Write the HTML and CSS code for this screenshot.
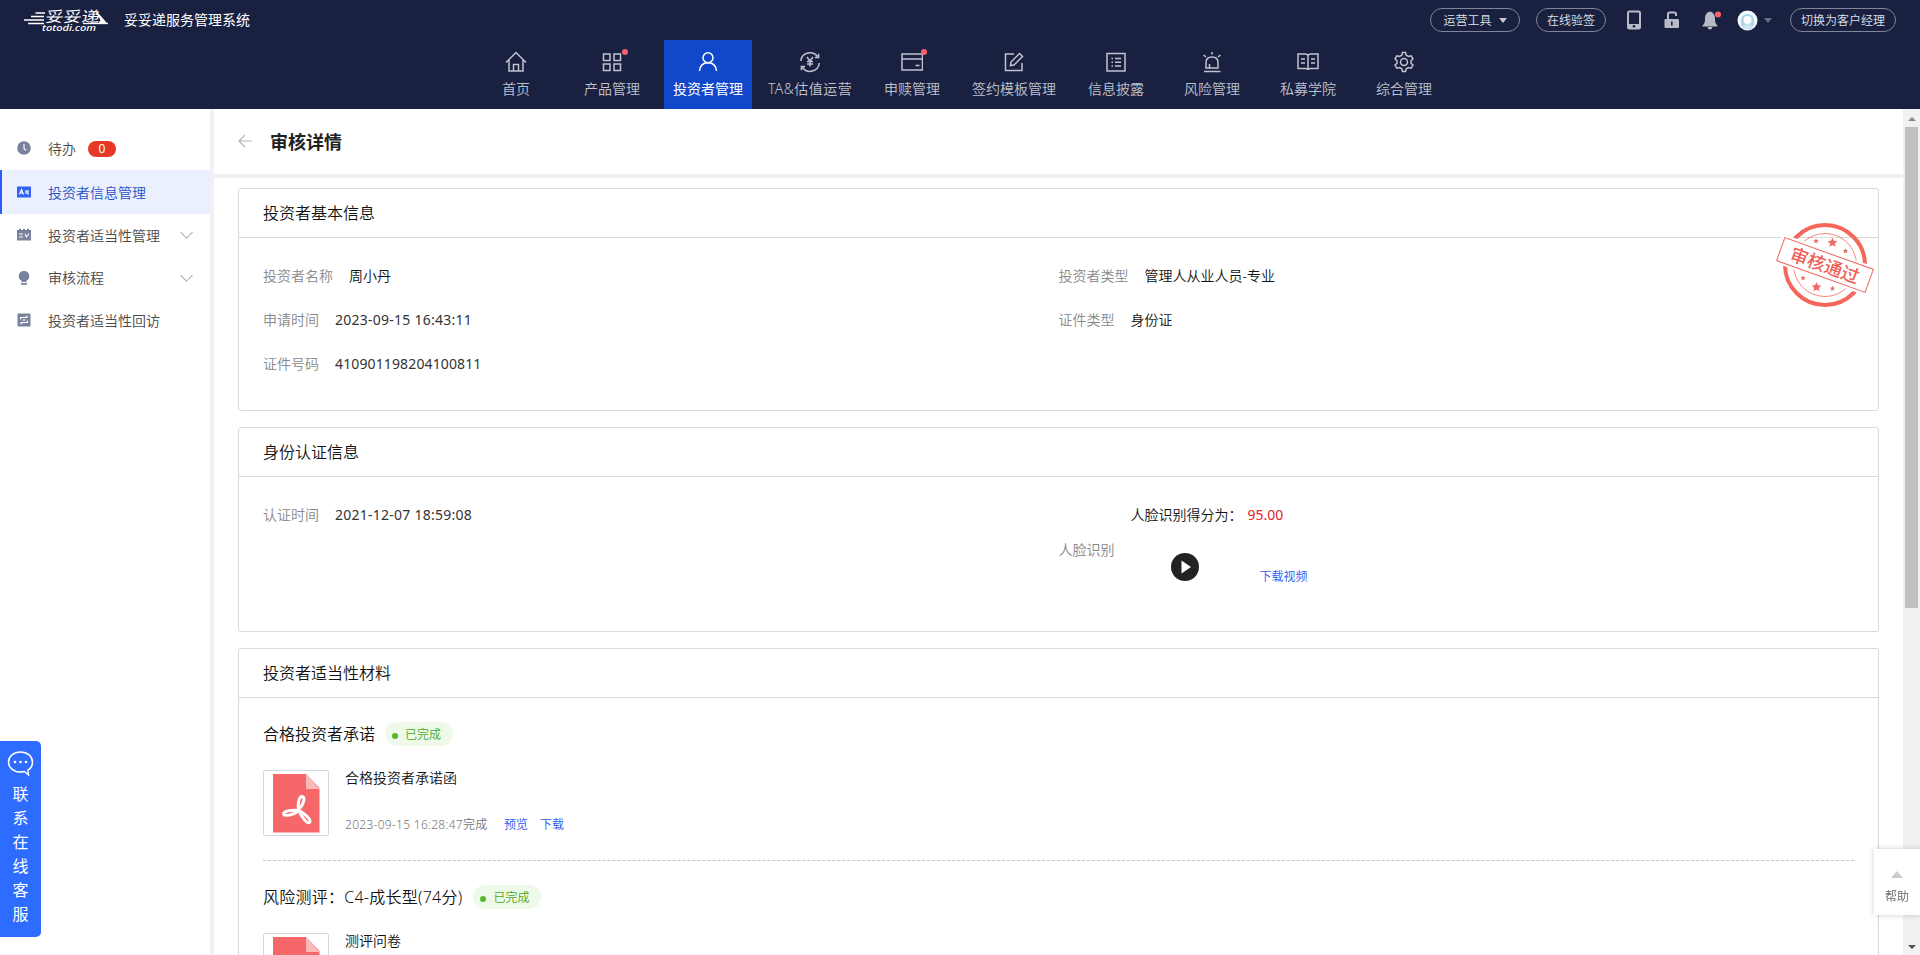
FILE: index.html
```html
<!DOCTYPE html>
<html lang="zh-CN">
<head>
<meta charset="utf-8">
<title>妥妥递服务管理系统</title>
<link rel="stylesheet" href="styles.css">
</head>
<body>
<svg class="defs" width="0" height="0">
  <symbol id="pdf" viewBox="0 0 48 60">
    <path d="M1 1H34L47.500 15V59.500H1Z" fill="#f56769"/>
    <path d="M34 1V16H47.500Z" fill="#fbb9ba"/>
    <g fill="none" stroke="#fff" stroke-width="3" stroke-linejoin="round">
      <path d="M26.500 36.500C25.500 31 27 23.500 30 23.500C34 24 31.500 32 26.500 36.500Z"/>
      <path d="M26.500 37.500C21 36.500 11.500 38 11.500 41C13 44 23 41.500 26.500 37.500Z"/>
      <path d="M27 37.500C29 43 34.500 51 37.500 49.500C40 47 33 40.500 27 37.500Z"/>
    </g>
  </symbol>
  <symbol id="star" viewBox="-10 -10 20 20"><path d="M0-9L2.600-3.200L8.700-2.800L4.200 1.600L5.500 7.700L0 4.600L-5.500 7.700L-4.200 1.600L-8.700-2.800L-2.600-3.200Z"/></symbol>
</svg>

<header class="header">
  <div class="topbar">
    <svg class="logo" width="86" height="26" viewBox="0 0 86 26">
      <g stroke="#fff" stroke-width="1.500"><path d="M11.500 6H21M7 9.500H20M0 13H20M4 16.500H20"/></g>
      <g class="logo-name" transform="translate(21 14.500) skewX(-8) scale(1.200 1)"><text x="0" y="0">妥妥递</text></g>
      <path d="M59 16.500H84" stroke="#fff" stroke-width="1.300" fill="none"/>
      <path d="M72 5C76 7 79 12 84 17H74L76.500 13C75 10 73.500 8 72 7Z" fill="#fff"/>
      <text class="logo-domain" x="18" y="24" textLength="54" lengthAdjust="spacingAndGlyphs">totodi.com</text>
    </svg>
    <span class="system-name">妥妥递服务管理系统</span>
    <div class="tools">
      <span class="pill pill-tools">运营工具<i class="caret"></i></span>
      <span class="pill pill-sign">在线验签</span>
      <svg class="tool-phone" width="14" height="20" viewBox="0 0 14 20"><rect x="1" y="1.500" width="12" height="17" rx="1.500" fill="none" stroke="#b8bbc6" stroke-width="2"/><path d="M1 14H13V18H1Z" fill="#b8bbc6"/><circle cx="7" cy="16.300" r="1.300" fill="#1a2140"/></svg>
      <svg class="tool-lock" width="16" height="18" viewBox="0 0 16 18"><rect x=".5" y="8" width="14.500" height="9" rx="1" fill="#b8bbc6"/><path d="M4 8V3Q4 1.500 5.500 1.500H10.500Q12 1.500 12 3V5" fill="none" stroke="#b8bbc6" stroke-width="2"/><rect x="7" y="10.500" width="1.600" height="4" fill="#1a2140"/></svg>
      <svg class="tool-bell" width="20" height="20" viewBox="0 0 20 20"><path d="M8 1.500C4 2.500 3 5.500 3 9C3 13 2 14 .5 15.500V16.500H15.500V15.500C14 14 13 13 13 9C13 5.500 12 2.500 8 1.500Z" fill="#b8bbc6"/><path d="M5.500 17H10.500Q10 19.500 8 19.500T5.500 17" fill="#b8bbc6"/><circle cx="16" cy="4.500" r="3" fill="#ff5f6b"/></svg>
      <svg class="tool-avatar" width="21" height="21" viewBox="0 0 21 21"><circle cx="10.500" cy="10.500" r="10" fill="#f3fbff"/><path d="M4 15Q3 4 10.500 4T17 15Q14 18 10.500 18T4 15" fill="#a9d4e8"/><circle cx="10.500" cy="10" r="4" fill="#fff"/><path d="M5 18Q6 14 10.500 14T16 18Q10.500 21 5 18" fill="#c9e6f2"/></svg>
      <i class="caret caret-dim"></i>
      <span class="pill pill-switch">切换为客户经理</span>
    </div>
  </div>
  <nav class="nav">
    <a class="nav-item"><svg class="nav-icon" viewBox="0 0 22 22"><path d="M1 11.500L11 1.500L21 11.500M4 9V20H18V9M8.500 20V13.500H13.500V20"/></svg>首页</a>
    <a class="nav-item"><svg class="nav-icon" viewBox="0 0 22 22"><path d="M2.500 3H9V9.500H2.500ZM13 3H19.500V9.500H13ZM2.500 13H9V19.500H2.500ZM13 13H19.500V19.500H13Z"/></svg><i class="dot dot-product"></i>产品管理</a>
    <a class="nav-item nav-active"><svg class="nav-icon" viewBox="0 0 22 22"><circle cx="11" cy="6.700" r="5"/><path d="M2.500 20C3 14.500 6.500 11.700 11 11.700S19 14.500 19.500 20"/></svg>投资者管理</a>
    <a class="nav-item nav-valuation"><svg class="nav-icon" viewBox="0 0 22 22"><path d="M1.800 10A9.300 9.300 0 0 1 18.500 5.500M20.300 12A9.300 9.300 0 0 1 3.500 16.500M19.600 2.800V6.500H16M2.400 19.200V15.500H6M8 6L11 10L14 6M11 10V15.500M8 10.500H14M8 13H14"/></svg>TA&amp;估值运营</a>
    <a class="nav-item"><svg class="nav-icon" viewBox="0 0 22 22"><path d="M1 3H21.500V19H1ZM1 8H21.500M14.500 14.500H18.500"/></svg><i class="dot dot-redeem"></i>申赎管理</a>
    <a class="nav-item"><svg class="nav-icon" viewBox="0 0 22 22"><path d="M11 3H2.500V19.500H19V12M7.500 14.500L8 11L16.500 2.500L19.500 5.500L11 14Z"/></svg>签约模板管理</a>
    <a class="nav-item"><svg class="nav-icon" viewBox="0 0 22 22"><path d="M2 2.500H20V20H2ZM6.500 7.500H8M10 7.500H16M6.500 11.200H8M10 11.200H16M6.500 15H8M10 15H16"/></svg>信息披露</a>
    <a class="nav-item"><svg class="nav-icon" viewBox="0 0 22 22"><path d="M5 17V11.500Q5 6 11 6T17 11.500V17ZM3 20.500H19.500M11 1V3.500M2.500 4L5 6M19.500 4L17 6M8.500 17V13"/></svg>风险管理</a>
    <a class="nav-item"><svg class="nav-icon" viewBox="0 0 22 22"><path d="M1 3H8Q11 3 11 5Q11 3 14 3H21V17.500H14Q11 17.500 11 19Q11 17.500 8 17.500H1ZM11 5V19M4 8H8M4 12H8M14 8H18M14 12H18"/></svg>私募学院</a>
    <a class="nav-item"><svg class="nav-icon" viewBox="0 0 22 22"><circle cx="11" cy="11" r="3.500"/><path d="M8.800 4.200L9.500 1.500H12.500L13.200 4.200L15.500 5.500L18.200 4.800L20 7.800L18 9.700V12.300L20 14.200L18.200 17.200L15.500 16.500L13.200 17.800L12.500 20.500H9.500L8.800 17.800L6.500 16.500L3.800 17.200L2 14.200L4 12.300V9.700L2 7.800L3.800 4.800L6.500 5.500Z"/></svg>综合管理</a>
  </nav>
</header>

<div class="layout">
  <aside class="sidebar">
    <a class="side-item"><svg class="side-icon" viewBox="0 0 14 14"><circle cx="7" cy="7" r="6.800"/><path class="cut" d="M7 3V7.500L9 9.500"/></svg>待办<span class="count">0</span></a>
    <a class="side-item side-active"><svg class="side-icon" viewBox="0 0 14 14"><path d="M0 1.500H14V12.500H0Z"/><path class="cut" d="M2.500 9.500L4.500 4.500L6.500 9.500M3 8H6M9 5V9M9 7H11M11 5V9H12"/></svg>投资者信息管理</a>
    <a class="side-item"><svg class="side-icon" viewBox="0 0 14 14"><path d="M0 2H2V.8H4V2H6V.8H8V2H10V.8H12V2H14V12.500H0Z"/><path class="cut" d="M2 6H6M2 9H6M8 6L9.500 9L12 5.500"/></svg>投资者适当性管理<i class="chevron"></i></a>
    <a class="side-item"><svg class="side-icon" viewBox="0 0 14 14"><path d="M7 0A5.200 5.200 0 0 1 9.500 9.800V11H4.500V9.800A5.200 5.200 0 0 1 7 0ZM4 12H10V13.800H4Z"/></svg>审核流程<i class="chevron"></i></a>
    <a class="side-item"><svg class="side-icon" viewBox="0 0 14 14"><path d="M.5.500H13.500V13.500H.5Z"/><path class="cut" d="M3.500 6.500V4.500H10.500M9 3L10.500 4.500M10.500 7.500V9.500H3.500M5 11L3.500 9.500M5.500 7H8.500"/></svg>投资者适当性回访</a>
  </aside>

  <main class="main">
    <div class="page-head">
      <svg class="back" width="14" height="14" viewBox="0 0 14 14"><path d="M14 7H1M7 1L1 7L7 13" fill="none" stroke="#b5b5b5" stroke-width="1.200"/></svg>
      <h1 class="page-title">审核详情</h1>
    </div>
    <div class="content">
      <section class="card card-basic">
        <h2 class="card-title">投资者基本信息</h2>
        <div class="fields">
          <div class="field"><span class="label">投资者名称</span><span>周小丹</span></div>
          <div class="field"><span class="label">投资者类型</span><span>管理人从业人员-专业</span></div>
          <div class="field"><span class="label">申请时间</span><span class="time">2023-09-15 16:43:11</span></div>
          <div class="field"><span class="label">证件类型</span><span>身份证</span></div>
          <div class="field"><span class="label">证件号码</span><span class="digits">410901198204100811</span></div>
        </div>
        <svg class="stamp" width="104" height="92" viewBox="-52 -46 104 92">
          <circle r="40" fill="none" stroke="#f5665b" stroke-width="4"/>
          <circle r="31.500" fill="none" stroke="#f5665b" stroke-width=".8"/>
          <g transform="rotate(19.800)">
            <rect x="-51" y="-15" width="102" height="30" fill="#fff"/>
            <rect x="-47" y="-12.200" width="94" height="24.400" fill="#fff" stroke="#ee6f68" stroke-width="1.100"/>
            <text class="stamp-text" x="0" y="7" text-anchor="middle">审核通过</text>
          </g>
          <g fill="#ed6b68">
            <use href="#star" x="2" y="-28" width="11" height="11"/><use href="#star" x="-12" y="-27" width="6" height="6"/><use href="#star" x="17.500" y="-17" width="6" height="6"/>
            <use href="#star" x="-14" y="16.500" width="11" height="11"/><use href="#star" x="-25" y="10" width="6" height="6"/><use href="#star" x="4.500" y="20.500" width="6" height="6"/>
          </g>
        </svg>
      </section>

      <section class="card">
        <h2 class="card-title">身份认证信息</h2>
        <div class="fields">
          <div class="field"><span class="label">认证时间</span><span class="time">2021-12-07 18:59:08</span></div>
          <div class="field field-face">
            <span class="label">人脸识别</span>
            <div class="face">
              <div class="score">人脸识别得分为：<span class="score-value">95.00</span></div>
              <div class="video">
                <svg width="28" height="28" viewBox="0 0 28 28"><circle cx="14" cy="14" r="14" fill="#222"/><path d="M10.500 7.500L20 14L10.500 20.500Z" fill="#fff"/></svg>
                <a class="link video-link">下载视频</a>
              </div>
            </div>
          </div>
        </div>
      </section>

      <section class="card">
        <h2 class="card-title">投资者适当性材料</h2>
        <div class="materials">
          <article class="material">
            <h3 class="material-title">合格投资者承诺<span class="status">已完成</span></h3>
            <div class="file">
              <div class="thumb"><svg width="48" height="60"><use href="#pdf"/></svg></div>
              <div class="file-info">
                <div class="file-name">合格投资者承诺函</div>
                <div class="file-meta"><span class="file-time">2023-09-15 16:28:47完成</span><a class="link">预览</a><a class="link">下载</a></div>
              </div>
            </div>
          </article>
          <article class="material">
            <h3 class="material-title"><span class="risk">风险测评：C4-成长型(74分)</span><span class="status">已完成</span></h3>
            <div class="file">
              <div class="thumb"><svg width="48" height="60"><use href="#pdf"/></svg></div>
              <div class="file-info"><div class="file-name">测评问卷</div></div>
            </div>
          </article>
        </div>
      </section>
    </div>
  </main>

  <div class="scrollbar"><i class="arrow-up"></i><div class="thumb-bar"></div><i class="arrow-down"></i></div>
</div>

<div class="service">
  <svg width="28" height="26" viewBox="0 0 28 26"><path d="M13.500 1C6.500 1 1.500 5.500 1.500 11S6.500 21 13.500 21Q16 21 17.500 20.500L21.500 24L21 19C24 17.500 25.500 14.500 25.500 11C25.500 5.500 20.500 1 13.500 1Z" fill="none" stroke="#fff" stroke-width="1.500"/><g fill="#fff"><circle cx="8" cy="11" r="1.300"/><circle cx="13.500" cy="11" r="1.300"/><circle cx="19" cy="11" r="1.300"/></g></svg>
  <span>联</span><span>系</span><span>在</span><span>线</span><span>客</span><span>服</span>
</div>
<div class="help"><i class="help-arrow"></i>帮助</div>
</body>
</html>
```
FILE: styles.css
```css
* { box-sizing: border-box; }
body {
  margin: 0;
  height: 955px;
  overflow: hidden;
  background: #fff;
  color: #111;
  font: 350 14px/20px "Noto Sans", "Noto Sans CJK SC", sans-serif;
}
i { font-style: normal; }
h1, h2, h3 { margin: 0; font-weight: 350; }
.defs { position: absolute; }

.header { height: 109px; background: #1a2140; color: #c0c3ce; }
.topbar { display: flex; align-items: center; height: 40px; padding: 0 24px; }
.logo { margin-top: -1px; overflow: visible; }
.logo-name { font-size: 15px; line-height: 15px; font-weight: 400; fill: #fff; }
.logo-domain { font: italic 500 9px "Noto Sans", sans-serif; fill: #fff; }
.system-name { margin-left: 14px; color: #fff; font-weight: 400; }
.tools { display: flex; align-items: center; margin-left: auto; font-size: 12px; }
.pill {
  display: flex; align-items: center; justify-content: center;
  height: 24px; padding-top: 1px; border: 1px solid #81859a; border-radius: 12px; color: #dfe1e8;
}
.pill-tools { width: 90px; gap: 7px; margin-right: 16px; }
.pill-sign { width: 70px; margin-right: 21px; }
.pill-switch { width: 106px; }
.tool-phone { margin-right: 23px; }
.tool-lock { margin-right: 22px; }
.tool-bell { margin-right: 15px; }
.tool-avatar { margin-right: 6px; }
.caret { border: 4px solid transparent; border-top: 5px solid #c6c8d2; border-bottom: 0; }
.caret-dim { border-top-color: #696e82; margin-right: 18px; }

.nav { display: flex; gap: 8px; height: 69px; padding-left: 472px; }
.nav-item {
  position: relative; display: flex; flex-direction: column; align-items: center;
  min-width: 88px; padding: 11px 8px 0; gap: 6px; white-space: nowrap;
}
.nav-active { background: #1148cb; color: #fff; font-weight: 400; }
.nav-valuation { width: 100px; padding: 11px 0 0; letter-spacing: .45px; }
.nav-icon { width: 22px; height: 22px; fill: none; stroke: currentColor; stroke-width: 1.500; flex: none; }
.dot { position: absolute; top: 9px; width: 6px; height: 6px; border-radius: 50%; background: #f5606c; }
.dot-product { left: 54px; }
.dot-redeem { left: 53px; }

.layout { display: flex; height: 846px; }
.sidebar { width: 214px; padding-top: 18px; border-right: 4px solid #f1f1f4; }
.side-item { display: flex; align-items: center; height: 43px; padding: 0 18px 0 17px; color: #484848; }
.side-item:nth-child(n+4) { height: 42.500px; }
.side-active { height: 44px; padding: 1px 18px 0 15px; border-left: 2px solid #2f5af5; background: #ebf0ff; color: #1d50c4; }
.side-icon { width: 14px; height: 14px; margin: -1px 17px 0 0; fill: #78829b; }
.side-active .side-icon { fill: #2f62f5; }
.cut { fill: none; stroke: #fff; stroke-width: 1.100; }
.count { width: 28px; height: 16px; margin-left: 12px; border-radius: 8px; background: #e73827; color: #fff; font-size: 12px; font-weight: 400; line-height: 16px; text-align: center; }
.chevron { width: 9px; height: 9px; margin: -6px 1px 0 auto; border: solid #aaa; border-width: 0 1px 1px 0; transform: rotate(45deg); }

.main { flex: 1; overflow: hidden; }
.page-head { display: flex; align-items: center; gap: 18px; height: 69px; padding: 0 24px; border-bottom: 4px solid #f1f1f3; }
.back { margin-top: -2px; }
.page-title { font-size: 18px; font-weight: 700; line-height: 24px; color: #222; }
.content { display: flex; flex-direction: column; gap: 16px; padding: 10px 24px 0; }
.card { border: 1px solid #d9d9d9; border-radius: 3px; }
.card-basic { position: relative; }
.card-title { height: 49px; padding: 0 24px; border-bottom: 1px solid #d9d9d9; font-size: 16px; line-height: 48px; }
.fields { display: grid; grid-template-columns: 1fr 1fr; padding: 16px 24px 24px; }
.field { display: flex; align-items: center; gap: 16px; height: 44px; }
.label { color: #888; }
.digits { color: #333; font-weight: 400; letter-spacing: .13px; }
.time { color: #333; font-weight: 400; letter-spacing: .25px; }
.field-face { height: 114px; }
.face { height: 114px; }
.score { height: 44px; line-height: 44px; }
.score-value { margin-left: 5px; color: #e8202c; font-weight: 400; }
.video { display: flex; align-items: center; height: 56px; padding-left: 40px; }
.video svg { margin-top: 4px; }
.link { color: #2a5af0; font-size: 12px; }
.video-link { margin: 24px 0 0 61px; }
.stamp { position: absolute; right: 1px; top: 30px; }
.stamp-text { font-size: 18px; font-weight: 500; fill: #ef6058; }

.materials { padding: 0 24px; }
.material { padding: 24px 0; border-bottom: 1px dashed #c4c4c4; }
.material-title { display: flex; align-items: center; height: 24px; font-size: 16px; }
.risk { letter-spacing: .25px; }
.status { display: flex; align-items: center; height: 24px; margin-left: 10px; padding: 1px 12px 0 7px; gap: 7px; border-radius: 12px; background: #eff9ea; color: #4aa822; font-size: 12px; }
.risk + .status { margin-left: 11px; }
.status::before { content: ""; width: 6px; height: 6px; margin-top: 2px; border-radius: 50%; background: #55b82e; }
.file { display: flex; gap: 16px; margin-top: 24px; }
.thumb { display: flex; justify-content: center; padding-top: 2px; width: 66px; height: 66px; border: 1px solid #d4d9df; border-radius: 2px; }
.file-info { display: flex; flex-direction: column; justify-content: space-between; height: 66px; padding: 0 0 1px; }
.file-name { line-height: 16px; }
.file-meta { display: flex; gap: 12px; color: #777; font-size: 12px; }
.file-time { width: 147px; letter-spacing: .28px; }

.scrollbar { display: flex; flex-direction: column; align-items: center; width: 17px; background: #f1f1f1; }
.arrow-up { margin: 8px 0 6px; border: 4px solid transparent; border-top: 0; border-bottom: 4px solid #888; }
.thumb-bar { width: 13px; height: 481px; background: #c1c1c1; }
.arrow-down { margin: auto 0 6px; border: 4px solid transparent; border-bottom: 0; border-top: 4px solid #505050; }

.service {
  position: fixed; left: 0; top: 741px; width: 41px; height: 196px;
  display: flex; flex-direction: column; align-items: center; padding-top: 10px;
  border-radius: 0 5px 5px 0; background: #2e6bff; color: #fff; font-size: 16px; font-weight: 400; line-height: 24px;
}
.service svg { margin-bottom: 5px; }
.help {
  position: fixed; right: 0; top: 849px; width: 46px; height: 66px;
  display: flex; flex-direction: column; align-items: center; padding-top: 22px; gap: 9px;
  background: #fff; box-shadow: 0 0 6px rgba(0, 0, 0, .2); color: #666; font-size: 12px;
}
.help-arrow { border: 6px solid transparent; border-top: 0; border-bottom: 7px solid #ccc; }
```
